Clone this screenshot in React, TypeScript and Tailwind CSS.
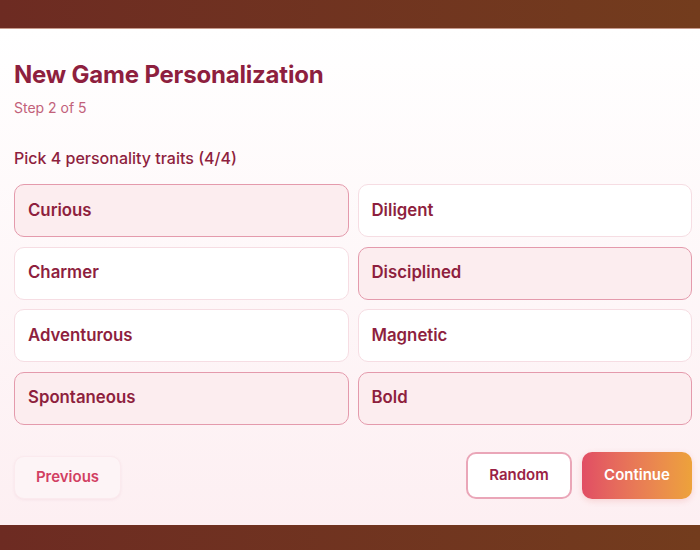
const traits = [
  { label: 'Curious', selected: true },
  { label: 'Diligent', selected: false },
  { label: 'Charmer', selected: false },
  { label: 'Disciplined', selected: true },
  { label: 'Adventurous', selected: false },
  { label: 'Magnetic', selected: false },
  { label: 'Spontaneous', selected: true },
  { label: 'Bold', selected: true },
];

export default function App() {
  return (
    <div
      className="h-[550px] w-[700px] overflow-hidden flex flex-col pt-[28px] pb-[25px] bg-gradient-to-r from-[#6d2b22] to-[#733c1d]"
      style={{ fontFamily: 'Inter, "Noto Sans", sans-serif' }}
    >
      <div className="flex-1 flex flex-col border-t border-[#c79a8c] bg-gradient-to-b from-white to-[#fdeff2] pl-[14px] pr-[8px]">
        {/* Header */}
        <h1 className="mt-[31px] text-[24px] leading-[30px] font-bold text-[#8e1f3e] tracking-[-0.2px]">
          New Game Personalization
        </h1>
        <p className="mt-[9px] text-[14px] leading-[18px] text-[#c2617a]">Step 2 of 5</p>

        <p className="mt-[31px] text-[16px] leading-[20px] font-medium text-[#8e1f3e]">
          Pick 4 personality traits (4/4)
        </p>

        {/* Traits */}
        <div className="mt-[16px] grid grid-cols-2 gap-x-[9px] gap-y-[9.5px]">
          {traits.map((t) => (
            <button
              key={t.label}
              className={
                'h-[53px] rounded-[10px] border px-[13px] text-left text-[16.8px] font-semibold text-[#8e1f3e] ' +
                (t.selected ? 'bg-[#fcedef] border-[#e49aac]' : 'bg-white border-[#f6dde3]')
              }
            >
              {t.label}
            </button>
          ))}
        </div>

        {/* Footer */}
        <div className="mt-[27px] flex items-end justify-between">
          <button className="h-[43px] w-[107px] rounded-[10px] bg-[#fdf4f6] border border-[#fbeaee] shadow-[0_1px_3px_rgba(180,80,110,0.08)] text-[15px] font-semibold text-[#d23f62]">
            Previous
          </button>
          <div className="flex gap-[10px]">
            <button className="h-[47px] w-[106px] rounded-[10px] bg-white border-2 border-[#eaa6b8] text-[15px] font-semibold text-[#9a2145]">
              Random
            </button>
            <button className="h-[47px] w-[110px] rounded-[10px] bg-gradient-to-r from-[#e14d64] to-[#eda23a] text-[15px] font-semibold text-white shadow-[0_2px_6px_rgba(220,90,80,0.2)]">
              Continue
            </button>
          </div>
        </div>
      </div>
    </div>
  );
}
